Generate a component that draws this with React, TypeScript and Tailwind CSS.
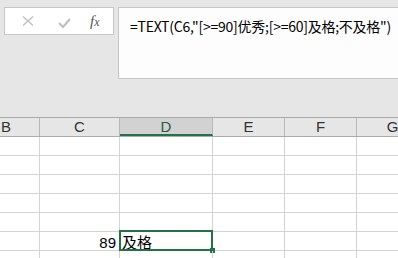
const cols = [
  { key: "B", w: "w-[40px]" },
  { key: "C", w: "w-[80px]" },
  { key: "D", w: "w-[93px]" },
  { key: "E", w: "w-[72px]" },
  { key: "F", w: "w-[72px]" },
  { key: "G", w: "w-[72px]" },
];

const font = "font-['Liberation_Sans','Noto_Sans_CJK_SC',sans-serif]";

function Row({ idx }: { idx: number }) {
  return (
    <div className="flex h-[19px] border-b border-[#d4d4d4]">
      {cols.map((c) => (
        <div
          key={c.key}
          className={`${c.w} relative flex shrink-0 items-center border-r border-[#d4d4d4] text-[15px] leading-none text-black`}
        >
          {idx === 6 && c.key === "C" && <span className="ml-auto mr-[3px] mt-[3px]">89</span>}
          {idx === 6 && c.key === "D" && (
            <>
              <span className="ml-[2px] mt-[3px]">及格</span>
              <div className="absolute left-[-1px] top-[-2px] h-[21px] w-[94px] border-2 border-[#217346]" />
              <div className="absolute left-[90px] top-[16px] h-[5px] w-[5px] bg-[#217346]" />
            </>
          )}
        </div>
      ))}
    </div>
  );
}

export default function App() {
  return (
    <div className={`h-[258px] w-[398px] overflow-hidden bg-white ${font}`}>
      {/* formula bar */}
      <div className="flex h-[117px] gap-[4px] bg-[#e6e6e6] pl-[4px] pt-[7px]">
        <div className="flex h-[28px] w-[110px] shrink-0 items-center border border-[#c6c6c6] bg-white">
          <svg width="12" height="12" viewBox="0 0 12 12" className="ml-[17px]">
            <path d="M1 1.5 L11 10.5 M11 1.5 L1 10.5" stroke="#bdbdbd" strokeWidth="1.3" fill="none" />
          </svg>
          <svg width="13" height="10" viewBox="0 0 13 10" className="ml-[24px] mt-[3px]">
            <path d="M1 5 L5 9 L12 1" stroke="#bdbdbd" strokeWidth="2" fill="none" />
          </svg>
          <span className="ml-[19px] font-['Liberation_Serif',serif] text-[15px] italic text-[#555]">
            f<span className="text-[12px]">x</span>
          </span>
        </div>
        <div className="h-[72px] flex-1 overflow-hidden whitespace-nowrap border border-r-0 border-[#c6c6c6] bg-[#fdfdfd] pl-[11px] pt-[8px] font-['Noto_Sans_CJK_SC',sans-serif] text-[14px] leading-[20px] tracking-[-0.25px] text-black">
          =TEXT(C6,"[&gt;=90]优秀;[&gt;=60]及格;不及格")
        </div>
      </div>

      {/* column header */}
      <div className="flex h-[20px] border-y border-[#ababab] bg-[#e6e6e6]">
        {cols.map((c) => (
          <div
            key={c.key}
            className={`${c.w} flex shrink-0 items-center justify-center border-r border-[#b8b8b8] text-[15px] ${
              c.key === "D" ? "border-b-2 border-b-[#217346] bg-[#d2d2d2] pt-[2px] text-[#2c5a40]" : "text-[#333]"
            } ${c.key === "B" ? "justify-start pl-[1px]" : ""}`}
          >
            {c.key}
          </div>
        ))}
      </div>

      {[1, 2, 3, 4, 5, 6, 7].map((i) => (
        <Row key={i} idx={i} />
      ))}
    </div>
  );
}
